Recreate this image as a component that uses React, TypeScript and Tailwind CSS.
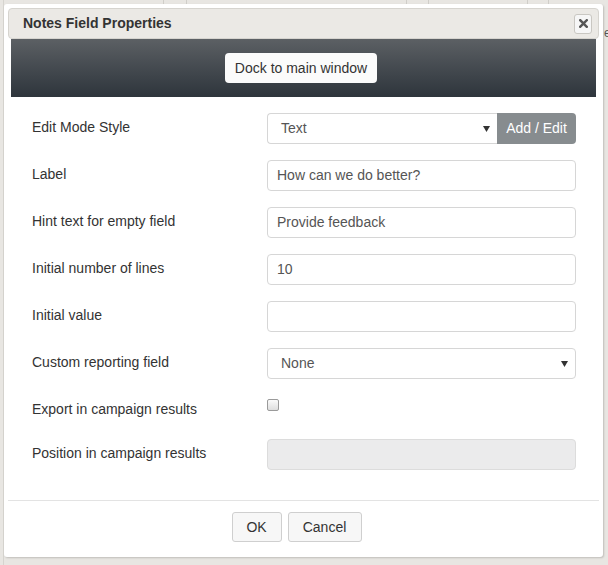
import React from "react";

function Caret() {
  return (
    <svg width="7" height="6" viewBox="0 0 7 6" className="shrink-0">
      <polygon points="0,0 7,0 3.5,6" fill="#333" />
    </svg>
  );
}

function Row({ label, children, h = "h-[31px]" }: { label: string; children: React.ReactNode; h?: string }) {
  return (
    <div className={`flex ${h}`}>
      <div className="w-[235px] shrink-0 pt-[4px] leading-[20px] text-[14px] text-[#333]">{label}</div>
      <div className="flex-1 min-w-0">{children}</div>
    </div>
  );
}

function TextInput({ value, disabled }: { value?: string; disabled?: boolean }) {
  return (
    <div
      className={`h-[31px] w-full rounded-[4px] border flex items-center px-[9px] text-[14px] text-[#555] ${
        disabled ? "bg-[#ebebec] border-[#dcdcdc]" : "bg-white border-[#d6d6d6]"
      }`}
    >
      {value}
    </div>
  );
}

export default function App() {
  return (
    <div className="relative w-[608px] h-[565px] overflow-hidden bg-[#e8e6e2] pt-[4px] pl-[4px] font-['Liberation_Sans',Arial,sans-serif]">
      {/* faint lines of the page behind */}
      <div className="absolute left-[3px] top-0 w-px h-full bg-[#d6d4cf]" />
      <div className="absolute left-[163px] top-0 w-px h-[4px] bg-[#d0cec9]" />
      <div className="absolute left-[186px] top-0 w-px h-[4px] bg-[#d0cec9]" />
      <div className="absolute left-[406px] top-0 w-px h-[4px] bg-[#d0cec9]" />
      <div className="absolute left-[428px] top-0 w-px h-[4px] bg-[#d0cec9]" />
      <div className="absolute left-[527px] top-0 w-px h-[4px] bg-[#d0cec9]" />
      <div className="absolute left-[548px] top-0 w-px h-[4px] bg-[#d0cec9]" />
      <div className="absolute left-[604px] top-[26px] text-[12px] leading-[14px] text-[#555]">e</div>

      <div className="relative w-[599px] h-[553px] bg-white rounded-[3px] shadow-[1px_1px_2px_rgba(0,0,0,0.18)] flex flex-col">
        {/* title bar */}
        <div className="mx-[4px] mt-[4px] h-[31px] bg-[#ebe9e5] border border-[#d6d4cf] rounded-[4px] flex items-center justify-between pl-[14px] pr-[6px]">
          <span className="text-[14px] font-bold text-[#333]">Notes Field Properties</span>
          <div className="w-[18px] h-[20px] rounded-[3px] border border-[#c9c7c2] bg-[#f6f6f6] flex items-center justify-center">
            <svg width="9" height="9" viewBox="0 0 9 9">
              <path d="M1.2 1.2 L7.8 7.8 M7.8 1.2 L1.2 7.8" stroke="#555" strokeWidth="2.4" strokeLinecap="square" />
            </svg>
          </div>
        </div>

        {/* dark band */}
        <div className="mx-[7px] h-[58px] bg-gradient-to-b from-[#5c6064] to-[#2e353c] flex items-center justify-center">
          <div className="h-[30px] px-[10px] bg-[#fbfbfb] rounded-[4px] flex items-center text-[14px] text-[#333] mr-[5px]">
            Dock to main window
          </div>
        </div>

        {/* form */}
        <div className="pt-[16px] pl-[28px] pr-[27px] flex flex-col gap-[16px]">
          <Row label="Edit Mode Style">
            <div className="flex h-[31px]">
              <div className="flex-1 rounded-l-[4px] border border-[#d6d6d6] border-r-0 flex items-center justify-between pl-[13px] pr-[7px] text-[14px] text-[#555]">
                <span>Text</span>
                <Caret />
              </div>
              <div className="w-[79px] rounded-r-[4px] bg-[#878c8f] flex items-center justify-center text-[14px] text-white">
                Add / Edit
              </div>
            </div>
          </Row>
          <Row label="Label">
            <TextInput value="How can we do better?" />
          </Row>
          <Row label="Hint text for empty field">
            <TextInput value="Provide feedback" />
          </Row>
          <Row label="Initial number of lines">
            <TextInput value="10" />
          </Row>
          <Row label="Initial value">
            <TextInput value="" />
          </Row>
          <Row label="Custom reporting field">
            <div className="h-[31px] rounded-[4px] border border-[#d6d6d6] flex items-center justify-between pl-[13px] pr-[7px] text-[14px] text-[#555]">
              <span>None</span>
              <Caret />
            </div>
          </Row>
          <Row label="Export in campaign results" h="h-[28px]">
            <div className="mt-[4px] w-[12px] h-[12px] rounded-[2px] border border-[#9a9a9a] bg-gradient-to-b from-[#fafafa] to-[#dedede]" />
          </Row>
          <Row label="Position in campaign results">
            <TextInput disabled />
          </Row>
        </div>

        {/* divider */}
        <div className="mx-[4px] mt-[30px] h-px bg-[#e3e3e3]" />

        {/* footer */}
        <div className="pt-[11px] flex justify-center gap-[6px] pr-[14px]">
          <div className="w-[50px] h-[30px] rounded-[3px] border border-[#cfcfcf] bg-[#f7f7f7] flex items-center justify-center text-[14px] text-[#333]">
            OK
          </div>
          <div className="w-[74px] h-[30px] rounded-[3px] border border-[#cfcfcf] bg-[#f7f7f7] flex items-center justify-center text-[14px] text-[#333]">
            Cancel
          </div>
        </div>
      </div>
    </div>
  );
}
